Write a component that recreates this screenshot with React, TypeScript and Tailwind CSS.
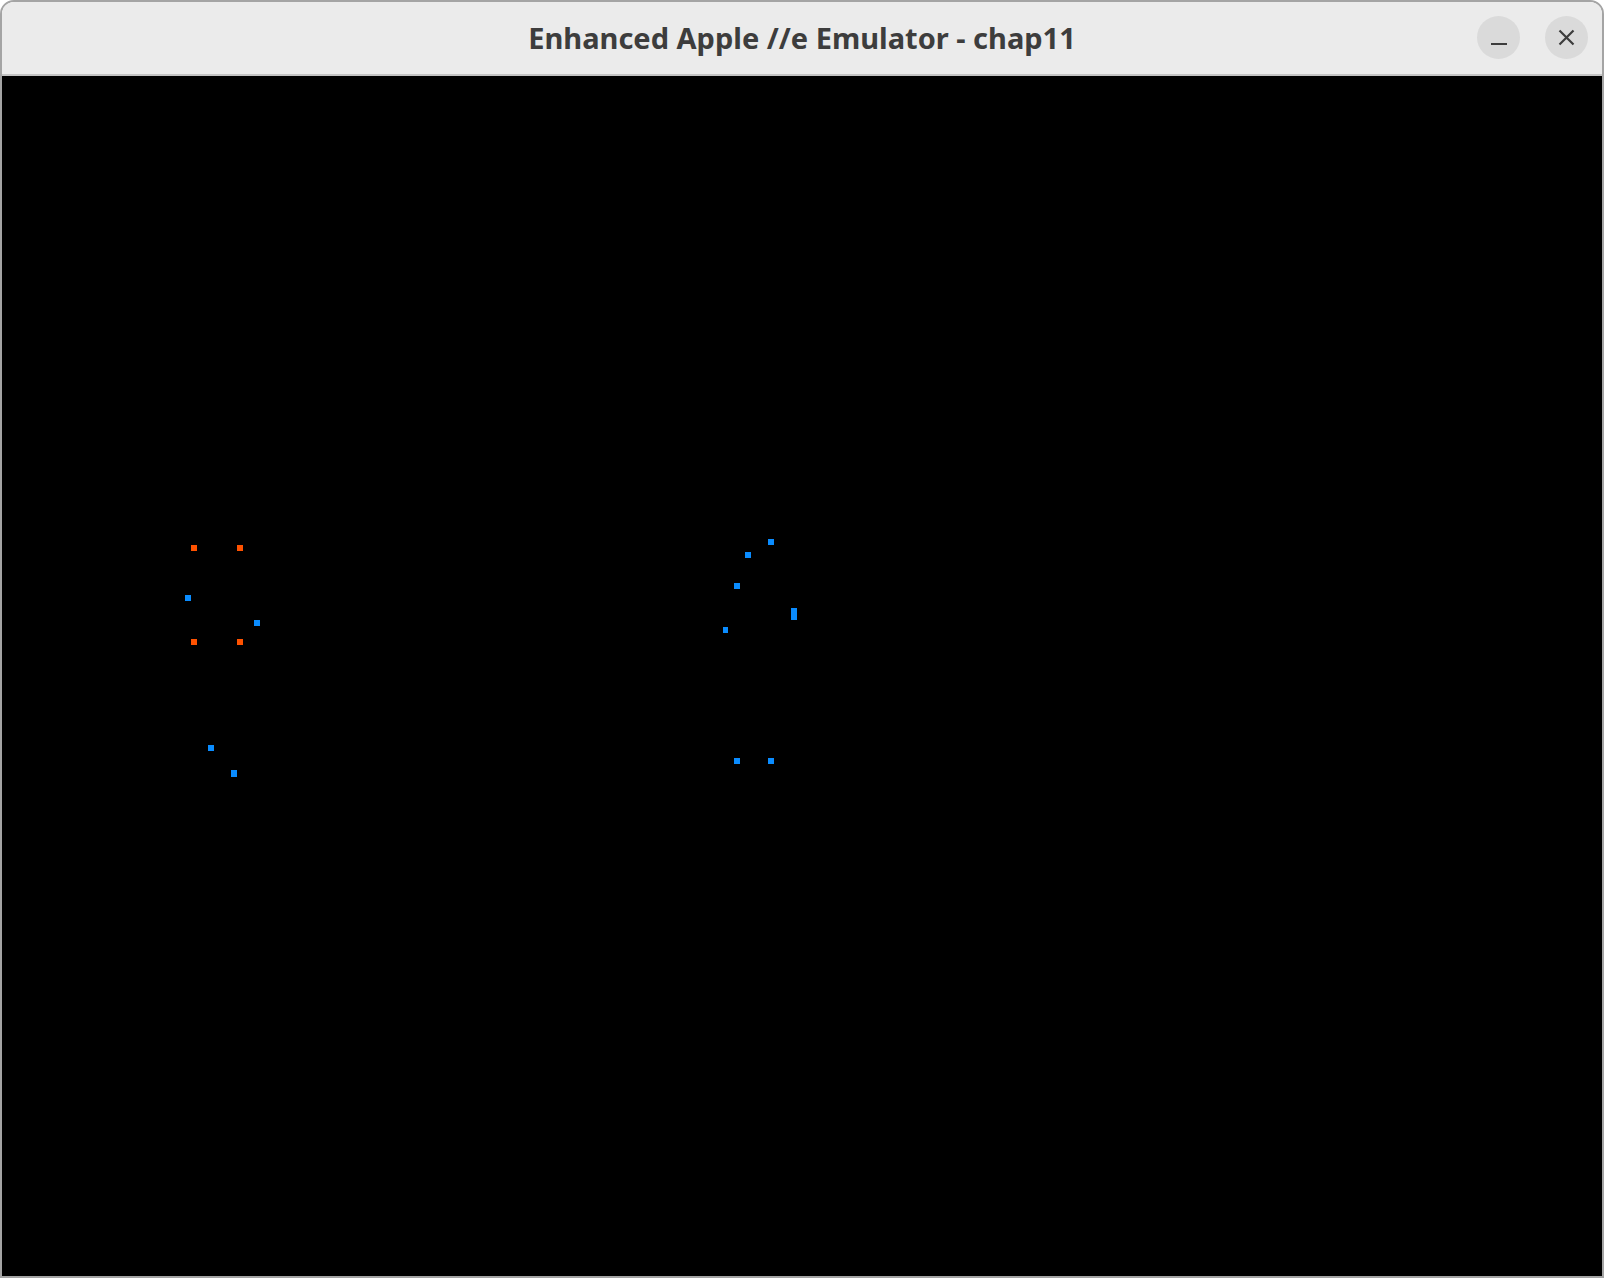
const dots = [
  { x: 191, y: 545, w: 6, h: 6, c: 'orange' },
  { x: 237, y: 545, w: 6, h: 6, c: 'orange' },
  { x: 191, y: 639, w: 6, h: 6, c: 'orange' },
  { x: 237, y: 639, w: 6, h: 6, c: 'orange' },
  { x: 185, y: 595, w: 6, h: 6, c: 'blue' },
  { x: 254, y: 620, w: 6, h: 6, c: 'blue' },
  { x: 208, y: 745, w: 6, h: 6, c: 'blue' },
  { x: 231, y: 770, w: 6, h: 7, c: 'blue' },
  { x: 768, y: 539, w: 6, h: 6, c: 'blue' },
  { x: 745, y: 552, w: 6, h: 6, c: 'blue' },
  { x: 734, y: 583, w: 6, h: 6, c: 'blue' },
  { x: 791, y: 608, w: 6, h: 12, c: 'blue' },
  { x: 723, y: 627, w: 5, h: 6, c: 'blue' },
  { x: 734, y: 758, w: 6, h: 6, c: 'blue' },
  { x: 768, y: 758, w: 6, h: 6, c: 'blue' },
]

export default function App() {
  return (
    <div className="w-[1604px] h-[1278px] bg-white">
      <div className="flex flex-col h-full border-2 border-[#a4a4a4] rounded-t-[14px] overflow-hidden">
        <div className="relative flex items-center justify-center h-[74px] bg-[#ebebeb] border-b-2 border-[#c4c4c4] shrink-0">
          <span
            className="text-[29px] font-bold text-[#3d3d3d]"
            style={{ fontFamily: '"Noto Sans", "Open Sans", sans-serif' }}
          >
            Enhanced Apple //e Emulator - chap11
          </span>
          <div className="absolute right-[14px] top-[14px] flex gap-[25px]">
            <button className="flex items-center justify-center w-[43px] h-[43px] rounded-full bg-[#dadada]">
              <span className="mt-[12px] block w-[16px] h-[2px] bg-[#3d3d3d]" />
            </button>
            <button className="flex items-center justify-center w-[43px] h-[43px] rounded-full bg-[#dadada]">
              <svg width="17" height="17" viewBox="0 0 17 17">
                <path d="M1.5 1.5 L15.5 15.5 M15.5 1.5 L1.5 15.5" stroke="#3d3d3d" strokeWidth="2.2" />
              </svg>
            </button>
          </div>
        </div>
        <div className="relative flex-1 bg-black">
          {dots.map((d, i) => (
            <div
              key={i}
              className={d.c === 'orange' ? 'absolute bg-[#ff5200]' : 'absolute bg-[#0a8cff]'}
              style={{ left: d.x - 2, top: d.y - 76, width: d.w, height: d.h }}
            />
          ))}
        </div>
      </div>
    </div>
  )
}
